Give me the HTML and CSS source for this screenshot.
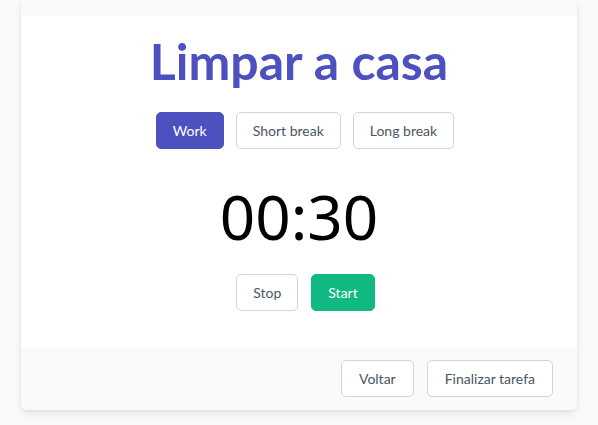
FILE: index.html
```html
<!DOCTYPE html>
<html>
<head>
<meta charset="utf-8">
<link rel="stylesheet" href="styles.css">
</head>
<body>
<div class="card">
  <div class="card-top"></div>
  <div class="card-body">
    <h1 class="title">Limpar a casa</h1>
    <div class="modes">
      <button class="btn btn-primary">Work</button>
      <button class="btn">Short break</button>
      <button class="btn">Long break</button>
    </div>
    <div class="timer">00:30</div>
    <div class="controls">
      <button class="btn">Stop</button>
      <button class="btn btn-success">Start</button>
    </div>
  </div>
  <div class="card-footer">
    <button class="btn">Voltar</button>
    <button class="btn">Finalizar tarefa</button>
  </div>
</div>
</body>
</html>
```
FILE: styles.css
```css
* { box-sizing: border-box; }
html, body { margin: 0; padding: 0; }
body {
  background: #f9fafb;
  font-family: "Lato", sans-serif;
  height: 425px;
  overflow: hidden;
}
.card {
  margin: 0 21px;
  width: 556px;
  background: #fff;
  border-radius: 0 0 6px 6px;
  box-shadow: 0 4px 8px rgba(0,0,0,0.08), 0 1px 3px rgba(0,0,0,0.06);
  overflow: hidden;
}
.card-top { height: 16px; background: #f8f9fb; }
.card-body {
  display: flex;
  flex-direction: column;
  align-items: center;
  padding: 21px 0 37px;
}
.title {
  margin: 0;
  font-size: 50px;
  line-height: 48px;
  font-weight: 700;
  color: #4c51bf;
}
.modes, .controls {
  display: flex;
}
.modes { margin-top: 27px; }
.modes .btn { margin-left: 12px; }
.btn {
  height: 37px;
  padding: 0 16px;
  border: 1px solid #d1d5db;
  border-radius: 5px;
  background: #fff;
  color: #4b5563;
  font-family: "Lato", sans-serif;
  font-size: 14px;
  cursor: pointer;
}
.btn-primary { background: #4c51bf; border-color: #4c51bf; color: #fff; }
.btn-success { background: #10b981; border-color: #10b981; color: #fff; }
.timer {
  margin-top: 28px;
  font-family: "Noto Sans", sans-serif;
  font-size: 62px;
  line-height: 78px;
  color: #000;
}
.controls { margin-top: 19px; }
.controls .btn { margin-left: 13px; }
.card-footer {
  background: #f9fafb;
  display: flex;
  justify-content: flex-end;
  gap: 13px;
  padding: 12px 24px 13px;
}
.card-footer .btn { padding: 0 17px; }
```
